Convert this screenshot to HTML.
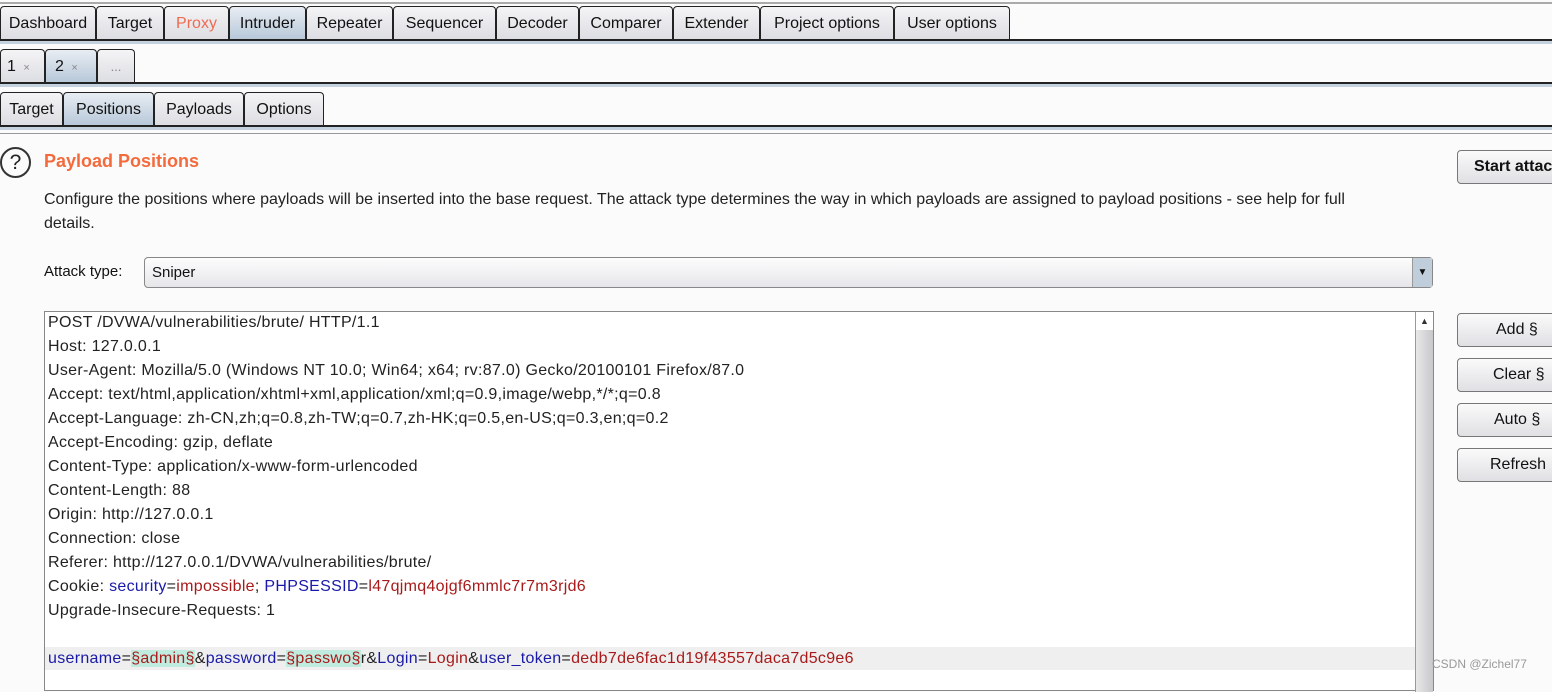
<!DOCTYPE html>
<html><head><meta charset="utf-8"><style>
*{margin:0;padding:0;box-sizing:border-box}
body{width:1552px;height:679px;overflow:hidden;background:#fbfbfb;font-family:"Liberation Sans",Arial,sans-serif;position:relative;color:#111}
.tab{position:absolute;height:34px;border:1px solid #222;border-bottom:none;border-radius:4px 4px 0 0;background:linear-gradient(#f4f4f6,#dcdde2);font-size:16px;text-align:center;line-height:33px;color:#111}
.tab.sel{background:linear-gradient(#e8edf3,#b6c7d8)}
.bar{position:absolute;left:0;width:1552px;height:5px;border-top:2px solid #222;background:#c4d2e0}
.gl{position:absolute;left:0;width:1552px;height:1px;background:#999}
.btn{position:absolute;left:1457px;width:110px;height:34px;border:1px solid #777;border-radius:4px;background:linear-gradient(#fafafa,#e0e0e4);font-size:16px;line-height:32px;text-align:center}
.ln{position:absolute;left:48px;font-size:16px;letter-spacing:0.3px;white-space:nowrap;color:#222}
.b{color:#1a1aa8}.r{color:#a81a1a}.h{background:#c0ece0}
</style></head><body>
<div class="gl" style="top:2px;background:#aaa;height:2px"></div>
<div class="tab" style="left:0;top:6px;width:96px">Dashboard</div>
<div class="tab" style="left:96px;top:6px;width:68px">Target</div>
<div class="tab" style="left:164px;top:6px;width:65px;color:#f06a50">Proxy</div>
<div class="tab sel" style="left:229px;top:6px;width:77px">Intruder</div>
<div class="tab" style="left:306px;top:6px;width:87px">Repeater</div>
<div class="tab" style="left:393px;top:6px;width:103px">Sequencer</div>
<div class="tab" style="left:496px;top:6px;width:83px">Decoder</div>
<div class="tab" style="left:579px;top:6px;width:94px">Comparer</div>
<div class="tab" style="left:673px;top:6px;width:87px">Extender</div>
<div class="tab" style="left:760px;top:6px;width:134px">Project options</div>
<div class="tab" style="left:894px;top:6px;width:116px">User options</div>
<div class="bar" style="top:39px"></div>
<div class="tab" style="left:0;top:49px;width:45px;text-align:left;padding-left:6px">1 <span style="font-size:11px;color:#888">&nbsp;×</span></div>
<div class="tab sel" style="left:45px;top:49px;width:52px;text-align:left;padding-left:9px">2 <span style="font-size:11px;color:#888">&nbsp;×</span></div>
<div class="tab" style="left:97px;top:49px;width:38px;color:#888;font-size:13px">...</div>
<div class="bar" style="top:82px"></div>
<div class="tab" style="left:0;top:92px;width:63px">Target</div>
<div class="tab sel" style="left:63px;top:92px;width:91px">Positions</div>
<div class="tab" style="left:154px;top:92px;width:90px">Payloads</div>
<div class="tab" style="left:244px;top:92px;width:80px">Options</div>
<div class="bar" style="top:125px"></div>
<div class="gl" style="top:133px"></div>
<div style="position:absolute;left:0;top:147px;width:31px;height:31px;border:2px solid #333;border-radius:50%;text-align:center;font-size:21px;line-height:27px;color:#222">?</div>
<div style="position:absolute;left:44px;top:151px;font-size:18px;font-weight:bold;color:#f36b3c">Payload Positions</div>
<div style="position:absolute;left:44px;top:188px;width:1400px;font-size:16px;line-height:24px;color:#222;white-space:nowrap">Configure the positions where payloads will be inserted into the base request. The attack type determines the way in which payloads are assigned to payload positions - see help for full<br>details.</div>
<div style="position:absolute;left:44px;top:263px;font-size:15px">Attack type:</div>
<div style="position:absolute;left:144px;top:257px;width:1289px;height:31px;border:1px solid #888;border-radius:4px;background:linear-gradient(#fdfdfd,#e6e6ea);font-size:15px;line-height:29px;padding-left:7px">Sniper
<div style="position:absolute;right:0;top:0;width:20px;height:29px;background:#c0cedb;border-left:1px solid #999;font-size:10px;text-align:center;line-height:29px">▼</div></div>
<div class="btn" style="top:150px;font-weight:bold;text-align:left;padding-left:16px">Start attack</div>
<div style="position:absolute;left:44px;top:311px;width:1390px;height:380px;border:1px solid #888;background:#fff"></div>
<div style="position:absolute;left:1415px;top:312px;width:18px;height:380px;background:linear-gradient(90deg,#e8e8e8,#c8c8cc);border-left:1px solid #999"><div style="font-size:9px;text-align:center;color:#333;background:#fff;height:18px;line-height:18px">▲</div></div>
<div style="position:absolute;left:45px;top:647px;width:1370px;height:23px;background:#efefef"></div>
<div class="ln" style="top:314px">POST /DVWA/vulnerabilities/brute/ HTTP/1.1</div>
<div class="ln" style="top:338px">Host: 127.0.0.1</div>
<div class="ln" style="top:362px">User-Agent: Mozilla/5.0 (Windows NT 10.0; Win64; x64; rv:87.0) Gecko/20100101 Firefox/87.0</div>
<div class="ln" style="top:386px">Accept: text/html,application/xhtml+xml,application/xml;q=0.9,image/webp,*/*;q=0.8</div>
<div class="ln" style="top:410px">Accept-Language: zh-CN,zh;q=0.8,zh-TW;q=0.7,zh-HK;q=0.5,en-US;q=0.3,en;q=0.2</div>
<div class="ln" style="top:434px">Accept-Encoding: gzip, deflate</div>
<div class="ln" style="top:458px">Content-Type: application/x-www-form-urlencoded</div>
<div class="ln" style="top:482px">Content-Length: 88</div>
<div class="ln" style="top:506px">Origin: http://127.0.0.1</div>
<div class="ln" style="top:530px">Connection: close</div>
<div class="ln" style="top:554px">Referer: http://127.0.0.1/DVWA/vulnerabilities/brute/</div>
<div class="ln" style="top:578px">Cookie: <span class="b">security</span>=<span class="r">impossible</span>; <span class="b">PHPSESSID</span>=<span class="r">l47qjmq4ojgf6mmlc7r7m3rjd6</span></div>
<div class="ln" style="top:602px">Upgrade-Insecure-Requests: 1</div>
<div class="ln" style="top:650px"><span class="b">username</span>=<span class="r h">§admin§</span>&amp;<span class="b">password</span>=<span class="r h">§passwo§</span>r&amp;<span class="b">Login</span>=<span class="r">Login</span>&amp;<span class="b">user_token</span>=<span class="r">dedb7de6fac1d19f43557daca7d5c9e6</span></div>
<div class="btn" style="top:313px;padding-left:38px;text-align:left">Add §</div>
<div class="btn" style="top:358px;padding-left:35px;text-align:left">Clear §</div>
<div class="btn" style="top:403px;padding-left:36px;text-align:left">Auto §</div>
<div class="btn" style="top:448px;padding-left:32px;text-align:left">Refresh</div>
<div style="position:absolute;left:1432px;top:657px;font-size:12px;color:#999">CSDN @Zichel77</div>
</body></html>
